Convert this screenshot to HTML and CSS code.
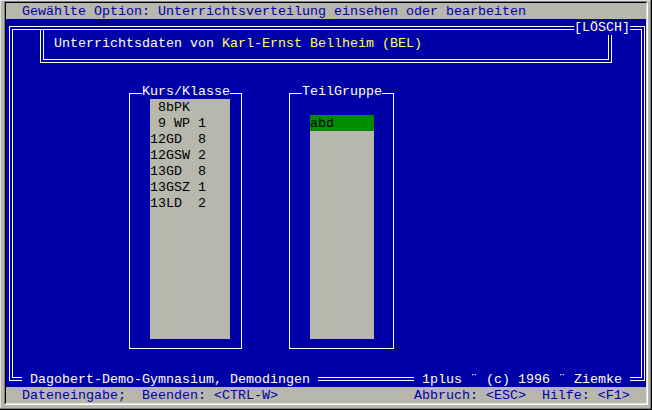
FILE: index.html
```html
<!DOCTYPE html>
<html lang="de">
<head>
<meta charset="utf-8">
<title>Unterrichtsverteilung</title>
<link rel="stylesheet" href="styles.css">
</head>
<body>
<div class="sunken"><div class="sunken-in">
<div class="screen">
  <div class="bar ln">  Gewählte Option: Unterrichtsverteilung einsehen oder bearbeiten</div>
  <div class="main">
    <div class="frame">
      <div class="frame-in">
        <div class="info">
          <div class="info-in">
            <div class="ln">Unterrichtsdaten von <span class="yel">Karl-Ernst Bellheim (BEL)</span></div>
          </div>
        </div>
        <div class="lists">
          <div class="box kurs">
            <div class="title ln">Kurs/Klasse</div>
            <div class="list list-kurs">
              <div class="ln"> 8bPK</div>
              <div class="ln"> 9 WP 1</div>
              <div class="ln">12GD  8</div>
              <div class="ln">12GSW 2</div>
              <div class="ln">13GD  8</div>
              <div class="ln">13GSZ 1</div>
              <div class="ln">13LD  2</div>
            </div>
          </div>
          <div class="box teil">
            <div class="title ln">TeilGruppe</div>
            <div class="list list-teil">
              <div class="ln sel">abd</div>
            </div>
          </div>
        </div>
      </div>
      <div class="label losch ln">[LÖSCH]</div>
      <div class="label school ln"> Dagobert-Demo-Gymnasium, Demodingen </div>
      <div class="label copy ln"> 1plus ¨ (c) 1996 ¨ Ziemke </div>
    </div>
  </div>
  <div class="bar ln">  Dateneingabe;  Beenden: &lt;CTRL-W&gt;                 Abbruch: &lt;ESC&gt;  Hilfe: &lt;F1&gt;</div>
</div>
</div></div>
</body>
</html>
```
FILE: styles.css
```css
* {
  box-sizing: border-box;
  margin: 0;
  padding: 0;
}

html, body {
  width: 652px;
  height: 410px;
}

body {
  background: #b7b7ab;
  font-family: "Liberation Mono", "Courier New", monospace;
  font-size: 13.3333px;
  overflow: hidden;
  padding: 1px 0 0 4px;
  box-shadow: inset -1px -1px 0 #000, inset -2px -2px 0 #808080, inset 1px 1px 0 #e0e0e0;
}

.sunken {
  width: 644px;
  border: 1px solid;
  border-color: #808080 #ffffff #ffffff #808080;
}

.sunken-in {
  width: 642px;
  border: 1px solid;
  border-color: #000000 #dfdfdf #dfdfdf #000000;
}

.screen {
  width: 640px;
  height: 400px;
  display: flex;
  flex-direction: column;
  background: #0000a8;
}

.ln {
  height: 16px;
  line-height: 18px;
  white-space: pre;
}

.bar {
  background: #b7b7ab;
  color: #0000a8;
}

.main {
  height: 368px;
  padding: 7px 0 0 3px;
}

.frame {
  position: relative;
  width: 636px;
  height: 355px;
  border: 1px solid #ffffff;
  padding: 2px;
}

.frame-in {
  height: 100%;
  border: 1px solid #ffffff;
}

.info {
  margin: -1px 0 0 27px;
  width: 572px;
  height: 34px;
  border: 1px solid #ffffff;
  border-top: 0;
  padding: 0 2px 2px;
}

.info-in {
  height: 100%;
  border: 1px solid #ffffff;
  border-top: 0;
  padding: 6px 0 0 10px;
  color: #ffffff;
}

.yel {
  color: #ffff55;
}

.lists {
  display: flex;
  gap: 47px;
  margin: 30px 0 0 116px;
}

.box {
  position: relative;
  height: 256px;
  border: 1px solid #ffffff;
  padding: 5px 0 0 20px;
}

.kurs {
  width: 113px;
}

.teil {
  width: 105px;
}

.title {
  position: absolute;
  top: -11px;
  left: 12px;
  background: #0000a8;
  color: #ffffff;
}

.list {
  background: #b7b7ab;
  color: #000000;
}

.list-kurs {
  width: 80px;
  height: 240px;
}

.list-teil {
  width: 64px;
  height: 224px;
  margin-top: 16px;
}

.sel {
  background: #008c00;
}

.label {
  position: absolute;
  background: #0000a8;
  color: #ffffff;
}

.losch {
  top: -8px;
  right: 14px;
}

.school {
  bottom: -7px;
  left: 12px;
}

.copy {
  bottom: -7px;
  right: 14px;
}
```
